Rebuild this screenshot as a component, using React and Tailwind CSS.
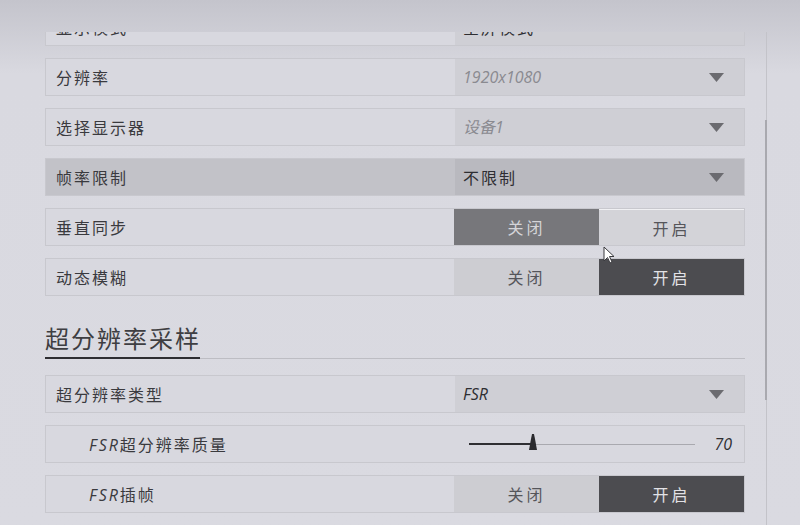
import React from 'react';

const cjk = { fontFamily: '"Noto Sans CJK SC", "Noto Sans", sans-serif' };
const latin = { fontFamily: '"Open Sans", "Noto Sans CJK SC", sans-serif' };

const Arrow = () => (
  <svg width="15" height="9" viewBox="0 0 15 9" className="shrink-0">
    <path d="M0 0 L15 0 L7.5 9 Z" fill="#6b6b70" />
  </svg>
);

const Row = ({ label, indent, highlight, children }) => (
  <div
    className={`flex h-[38px] shrink-0 border border-[#c8c8ce] ${
      highlight ? 'bg-[#c2c2c8]' : 'bg-[#d8d8df]'
    }`}
  >
    <div
      className={`flex w-[409px] items-center text-[16px] tracking-[2px] text-[#3a3a3e] ${
        indent ? 'pl-[43px]' : 'pl-[10px]'
      }`}
      style={cjk}
    >
      {label}
    </div>
    <div className="flex flex-1 items-stretch">{children}</div>
  </div>
);

const Select = ({ value, muted, upright, highlight }) => (
  <div
    className={`flex flex-1 items-center justify-between pl-[8px] pr-[20px] ${
      highlight ? 'bg-[#b9b9bf]' : 'bg-[#cfcfd5]'
    }`}
  >
    <span
      className={`text-[16px] ${upright ? 'tracking-[2px]' : 'italic'} ${
        muted ? 'text-[#8a8a90]' : 'text-[#2e2e32]'
      }`}
      style={upright ? cjk : latin}
    >
      {value}
    </span>
    <Arrow />
  </div>
);

const Toggle = ({ on, offStyle }) => {
  const base = 'flex w-[145px] items-center justify-center text-[16px] tracking-[3px]';
  const dark = 'bg-[#4c4c50] text-[#e2e2e6]';
  const offDark = offStyle === 'hover' ? 'bg-[#77777b] text-[#d4d4d8]' : dark;
  const light = 'bg-[#cdcdd2] text-[#55555a]';
  return (
    <div className="flex flex-1" style={cjk}>
      <div className={`${base} ${on ? light : offDark}`}>关闭</div>
      <div
        className={`${base} ${
          on ? dark : 'border-t border-[#f0f0f3] bg-[#d3d3d8] text-[#55555a]'
        }`}
      >
        开启
      </div>
    </div>
  );
};

const Slider = ({ value }) => (
  <div className="flex flex-1 items-center bg-[#d8d8df] pl-[14px] pr-[12px]">
    <div className="relative flex h-[20px] w-[226px] items-center">
      <div className="h-px flex-1 bg-[#a9a9af]" />
      <div className="absolute left-0 top-[9px] h-[2px] w-[64px] bg-[#2f2f33]" />
      <svg width="10" height="16" viewBox="0 0 10 16" className="absolute left-[59px] top-[0px]">
        <path d="M4 0 L6 0 L7 5 L9 16 L1 16 L3 5 Z" fill="#2a2a2e" />
      </svg>
    </div>
    <span className="ml-auto text-[16px] italic text-[#2e2e32]" style={latin}>
      {value}
    </span>
  </div>
);

const Cursor = () => (
  <svg
    width="14"
    height="20"
    viewBox="0 0 14 20"
    className="absolute left-[603px] top-[246px]"
  >
    <path d="M1 1 L1 15 L4.5 11.5 L7 17 L9 16 L6.5 10.5 L11 10.5 Z" fill="#ffffff" stroke="#3a3a3e" strokeWidth="1" />
  </svg>
);

export default function App() {
  return (
    <div className="relative h-[525px] w-[800px] overflow-hidden bg-linear-to-b from-[#c4c4cc] via-[#d9d9e0] via-[14%] to-[#dadae1]">
      <div className="h-[32px]" />
      <div className="flex h-[493px]">
        <div className="ml-[45px] w-[700px] overflow-hidden">
          <div className="-mt-[24px] flex flex-col gap-[12px]">
            <Row label="显示模式">
              <Select value="全屏模式" upright />
            </Row>
            <Row label="分辨率">
              <Select value="1920x1080" muted />
            </Row>
            <Row label="选择显示器">
              <Select value="设备1" muted />
            </Row>
            <Row label="帧率限制" highlight>
              <Select value="不限制" upright highlight />
            </Row>
            <Row label="垂直同步">
              <Toggle on={false} offStyle="hover" />
            </Row>
            <Row label="动态模糊">
              <Toggle on />
            </Row>

            <div className="flex h-[55px] shrink-0 flex-col justify-end pb-[4px]">
              <span
                className="text-[24px] leading-[30px] tracking-[2px] text-[#3e3e42]"
                style={cjk}
              >
                超分辨率采样
              </span>
              <div className="mt-[4px] flex items-end">
                <div className="h-[2px] w-[155px] bg-[#2e2e32]" />
                <div className="h-px flex-1 bg-[#bdbdc3]" />
              </div>
            </div>

            <Row label="超分辨率类型">
              <Select value="FSR" />
            </Row>
            <Row label={<span><i style={latin}>FSR</i>超分辨率质量</span>} indent>
              <Slider value="70" />
            </Row>
            <Row label={<span><i style={latin}>FSR</i>插帧</span>} indent>
              <Toggle on />
            </Row>
          </div>
        </div>

        <div className="relative ml-[21px] w-px bg-[#c3c3c9]">
          <div className="absolute -left-px top-[88px] h-[280px] w-[2px] bg-[#a9a9af]" />
        </div>
      </div>
      <Cursor />
    </div>
  );
}
